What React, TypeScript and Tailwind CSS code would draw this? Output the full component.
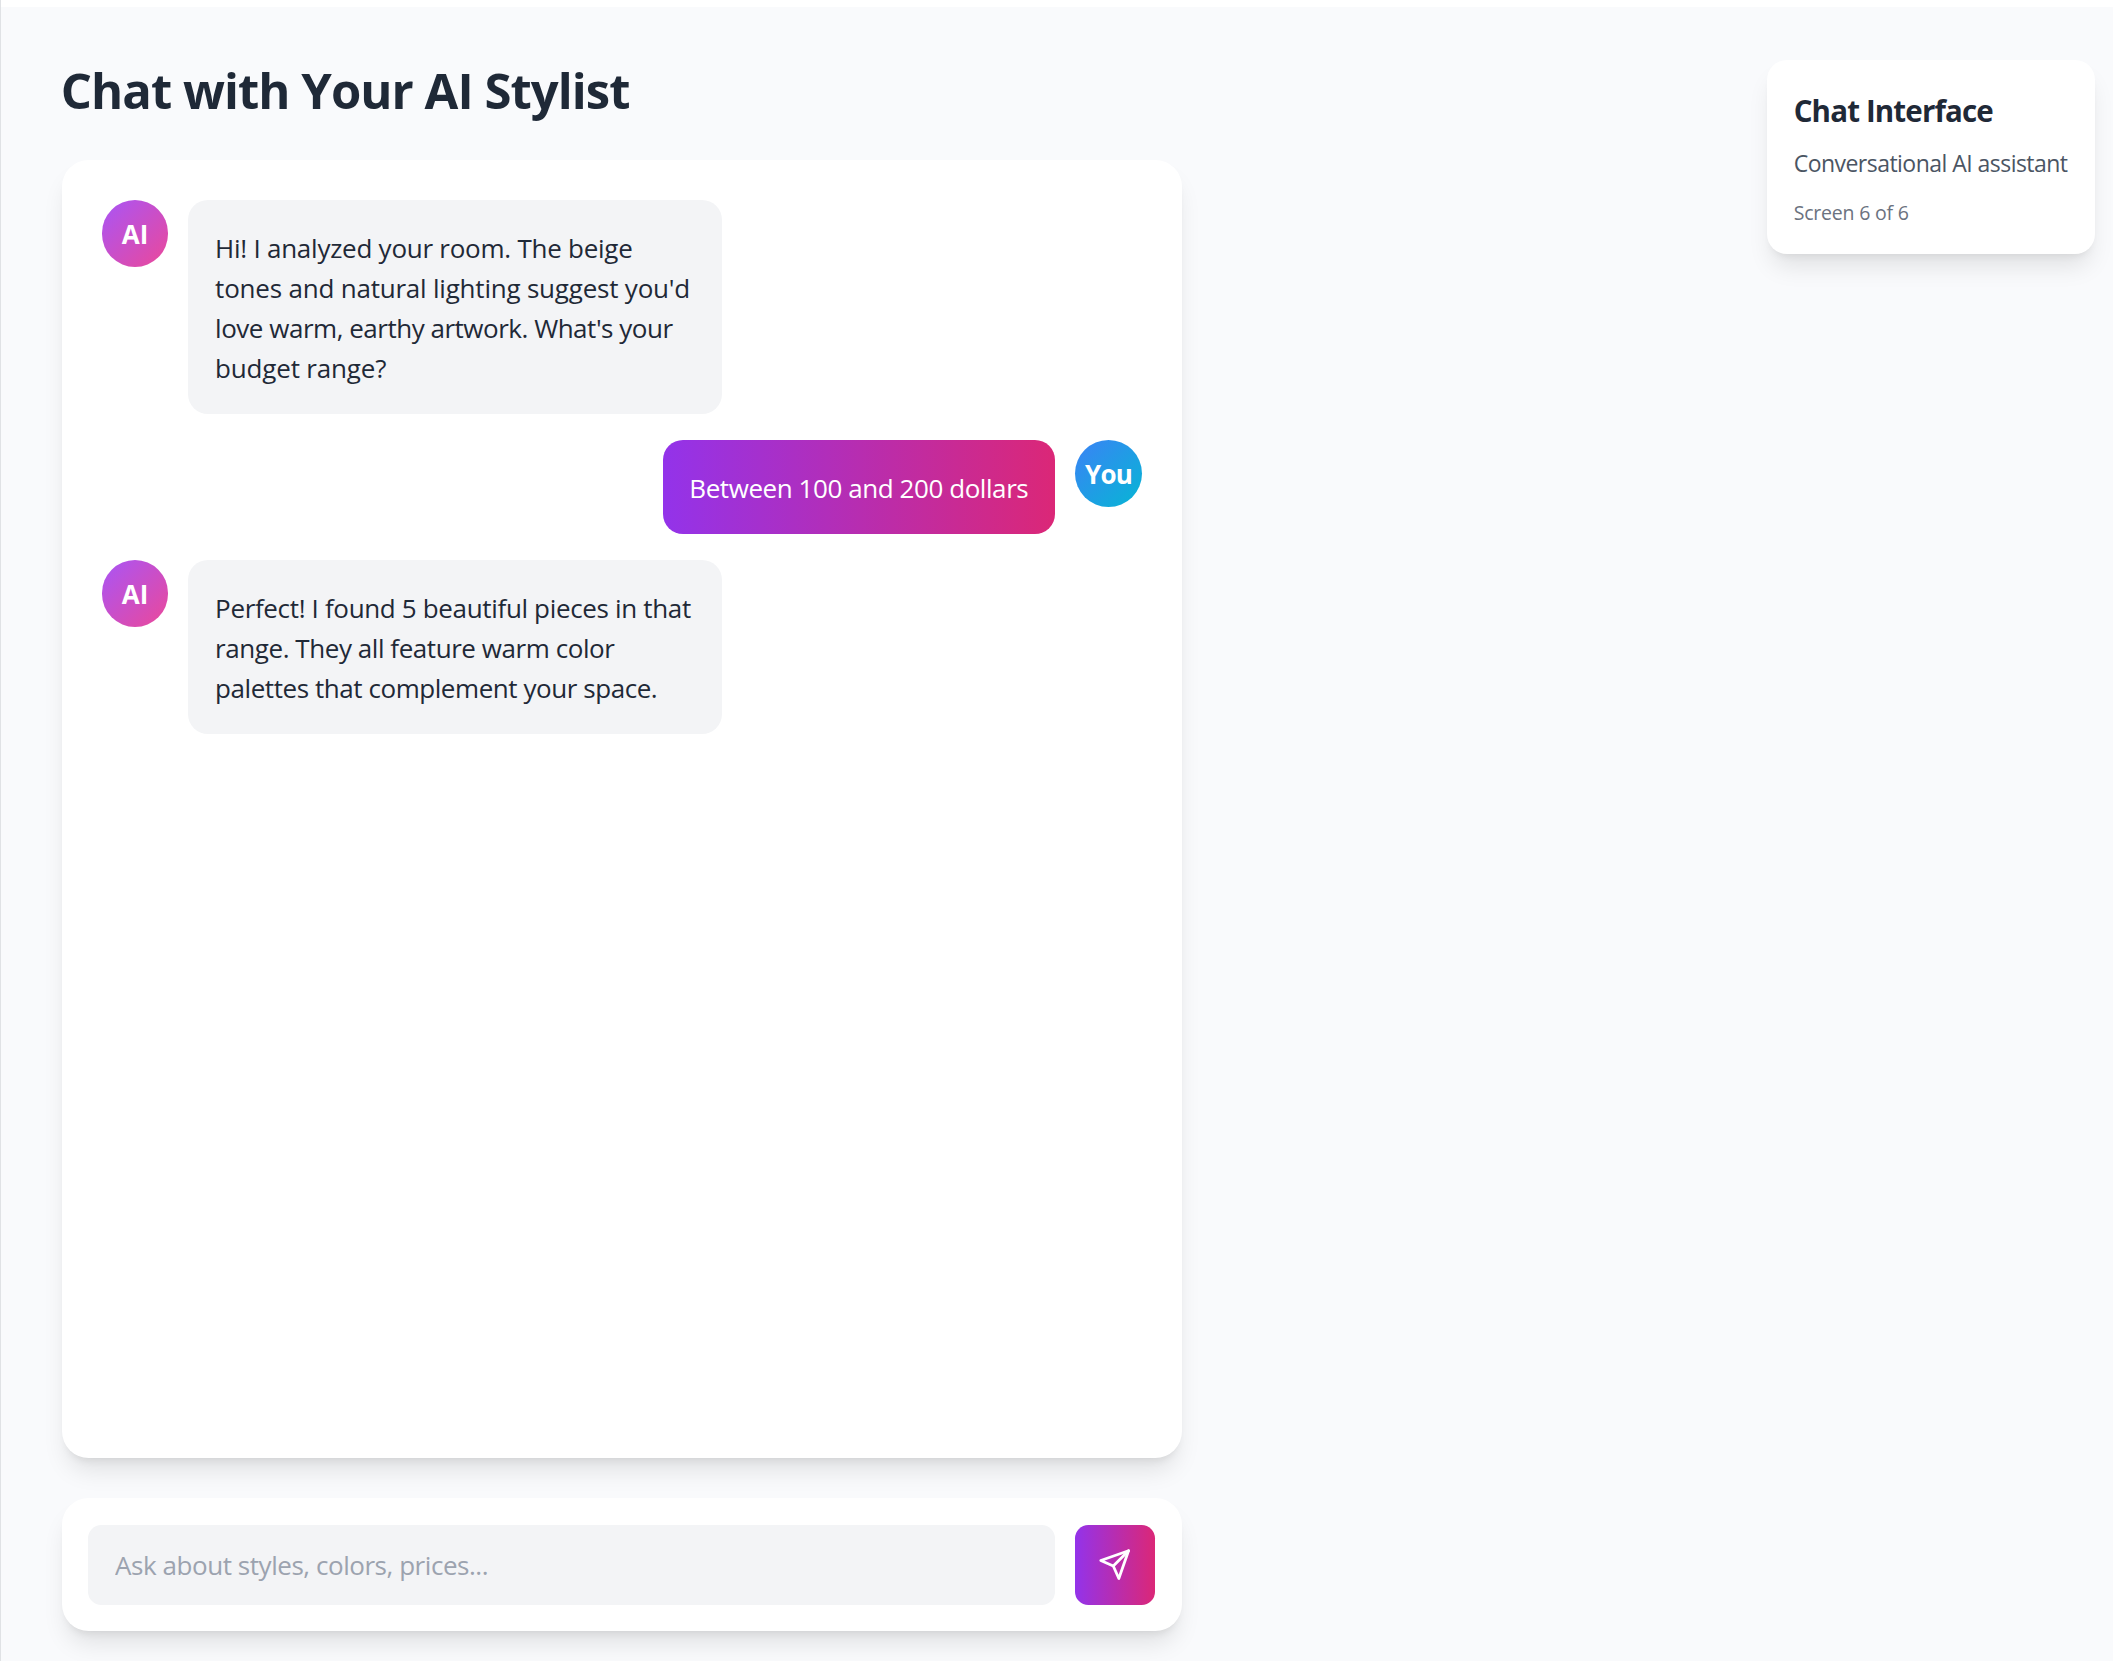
type Line = { text: string; tracking: string };
type Message = { from: "ai" | "user"; lines: Line[] };

const messages: Message[] = [
  {
    from: "ai",
    lines: [
      { text: "Hi! I analyzed your room. The beige", tracking: "tracking-[-0.25px]" },
      { text: "tones and natural lighting suggest you'd", tracking: "tracking-[-0.21px]" },
      { text: "love warm, earthy artwork. What's your", tracking: "tracking-[-0.48px]" },
      { text: "budget range?", tracking: "tracking-[-0.18px]" },
    ],
  },
  {
    from: "user",
    lines: [{ text: "Between 100 and 200 dollars", tracking: "tracking-[-0.43px]" }],
  },
  {
    from: "ai",
    lines: [
      { text: "Perfect! I found 5 beautiful pieces in that", tracking: "tracking-[-0.34px]" },
      { text: "range. They all feature warm color", tracking: "tracking-[-0.44px]" },
      { text: "palettes that complement your space.", tracking: "tracking-[-0.44px]" },
    ],
  },
];

const cardShadow =
  "shadow-[0_16.67px_25px_-5px_rgba(0,0,0,0.1),0_6.67px_10px_-6.67px_rgba(0,0,0,0.1)]";

function Avatar({ from }: { from: Message["from"] }) {
  const isAi = from === "ai";
  return (
    <div
      className={`flex size-[66.67px] shrink-0 items-center justify-center rounded-full pt-[1.5px] text-[26px] leading-10 font-bold text-white ${
        isAi
          ? "bg-linear-to-br/srgb from-[#a855f7] to-[#ec4899]"
          : "bg-linear-to-br/srgb from-[#3b82f6] to-[#06b6d4] tracking-[-0.8px]"
      }`}
    >
      {isAi ? "AI" : "You"}
    </div>
  );
}

function ChatMessage({ message }: { message: Message }) {
  const isAi = message.from === "ai";
  return (
    <div className={`flex items-start gap-5 ${isAi ? "" : "flex-row-reverse"}`}>
      <Avatar from={message.from} />
      <div
        className={`rounded-[20px] px-[26.67px] pt-[27.3px] pb-[26.04px] text-[26px] leading-10 whitespace-nowrap ${
          isAi
            ? "w-[533.33px] bg-[#f3f4f6] text-[#1f2937]"
            : "w-[392.5px] bg-linear-to-r/srgb from-[#9333ea] to-[#db2777] text-white"
        }`}
      >
        {message.lines.map((line) => (
          <p key={line.text} className={line.tracking}>
            {line.text}
          </p>
        ))}
      </div>
    </div>
  );
}

function SendIcon() {
  return (
    <svg
      viewBox="0 0 24 24"
      className="size-[33.33px]"
      fill="none"
      stroke="currentColor"
      strokeWidth="2"
      strokeLinecap="round"
      strokeLinejoin="round"
    >
      <path d="m22 2-7 20-4-9-9-4Z" />
      <path d="M22 2 11 13" />
    </svg>
  );
}

export default function App() {
  return (
    <div className="h-[1661px] overflow-hidden border-l border-[#e0e2e5] bg-white pt-[6.67px] font-['Open_Sans','Noto_Sans',sans-serif]">
      <div className="flex h-full items-start justify-between bg-[#f9fafc] pt-[53.7px] pr-[17.67px] pl-[60.8px]">
        <main className="w-[1120px]">
          <h1 className="mb-10 -ml-px pt-px text-[49px] leading-[59px] font-bold tracking-[-0.96px] whitespace-nowrap text-[#1f2937]">
            Chat with Your AI Stylist
          </h1>
          <section
            className={`mb-10 flex h-[1297.67px] flex-col gap-[26.67px] rounded-[26.67px] bg-white p-10 ${cardShadow}`}
          >
            {messages.map((message, i) => (
              <ChatMessage key={i} message={message} />
            ))}
          </section>
          <form
            className={`flex gap-5 rounded-[26.67px] bg-white p-[26.67px] ${cardShadow}`}
            onSubmit={(e) => e.preventDefault()}
          >
            <input
              type="text"
              placeholder="Ask about styles, colors, prices..."
              className="h-20 min-w-0 flex-1 rounded-[13.33px] bg-[#f3f4f6] px-[26.67px] text-[26px] leading-10 tracking-[-0.45px] text-[#1f2937] outline-none placeholder:text-[#9ca3af]"
            />
            <button
              type="submit"
              aria-label="Send"
              className="flex size-20 items-center justify-center rounded-[13.33px] bg-linear-to-r/srgb from-[#9333ea] to-[#db2777] text-white"
            >
              <SendIcon />
            </button>
          </form>
        </main>
        <aside className={`w-[328.33px] rounded-[20px] bg-white p-[26.67px] whitespace-nowrap ${cardShadow}`}>
          <h2 className="pt-px text-[29.5px] leading-[45.67px] font-bold tracking-[-0.85px] text-[#1f2937]">
            Chat Interface
          </h2>
          <p className="mt-[13.33px] text-[23px] leading-[33.33px] tracking-[-0.53px] text-[#4b5563]">
            Conversational AI assistant
          </p>
          <p className="mt-5 text-[19.5px] leading-[26.67px] tracking-[-0.2px] text-[#6b7280]">
            Screen 6 of 6
          </p>
        </aside>
      </div>
    </div>
  );
}
